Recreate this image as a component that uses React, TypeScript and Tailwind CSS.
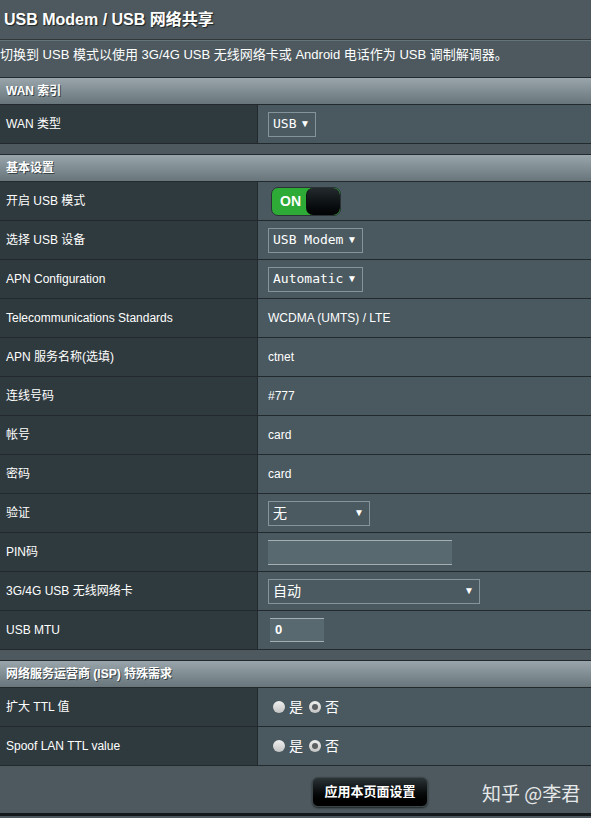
import React from 'react';

const SANS = "font-['Liberation_Sans','Noto_Sans_CJK_SC',sans-serif]";
const MONO = "font-['DejaVu_Sans_Mono',monospace]";

function Header({ title }: { title: string }) {
  return (
    <div className="h-[27px] flex items-center px-[6px] border-b border-[#222a2d] bg-gradient-to-b from-[#99a5aa] to-[#68767c] text-[12px] font-bold text-white [text-shadow:1px_1px_0_#3a4448]">
      {title}
    </div>
  );
}

function Row({ label, children }: { label: string; children?: React.ReactNode }) {
  return (
    <div className="h-[39px] flex border-b border-[#222a2d]">
      <div className="w-[258px] shrink-0 flex items-center px-[6px] bg-[#2f3a3e] border-r border-[#222a2d] text-[12px] text-white">
        {label}
      </div>
      <div className="flex-1 flex items-center pl-[10px] bg-[#4a595f] text-[12px] text-white">
        {children}
      </div>
    </div>
  );
}

function Select({ value, width, mono = true }: { value: string; width: string; mono?: boolean }) {
  return (
    <div
      className={`${width} h-[25px] flex items-center justify-between pl-[4px] pr-[5px] border border-[#85939a] bg-[#4a5a60] text-white`}
    >
      <span className={mono ? `${MONO} text-[13px]` : `${SANS} text-[14px]`}>{value}</span>
      <span className="text-[10px] leading-none">▼</span>
    </div>
  );
}

function Toggle() {
  return (
    <div className="relative ml-[3px] w-[70px] h-[29px] rounded-[7px] bg-[#2eaa37] border border-[#2a3236] overflow-hidden">
      <span className="absolute left-[8px] top-[4px] text-[14px] font-bold text-white leading-[19px]">ON</span>
      <div className="absolute right-0 top-0 bottom-0 w-[34px] rounded-[7px] bg-gradient-to-b from-[#232a2d] to-[#020304] border-l border-[#111]" />
    </div>
  );
}

function Radio({ checked }: { checked?: boolean }) {
  return (
    <span className="w-[12px] h-[12px] rounded-full bg-gradient-to-b from-[#f0f0f0] to-[#c4c4c4] flex items-center justify-center">
      {checked && <span className="w-[6px] h-[6px] rounded-full bg-[#5b5f61]" />}
    </span>
  );
}

function YesNo() {
  return (
    <div className="flex items-center ml-[5px] text-[14px]">
      <Radio />
      <span className="ml-[4px]">是</span>
      <span className="ml-[6px]" />
      <Radio checked />
      <span className="ml-[4px]">否</span>
    </div>
  );
}

export default function App() {
  return (
    <div className={`w-[591px] h-[818px] overflow-hidden bg-[#4d595e] text-white ${SANS}`}>
      {/* page title */}
      <div className="h-[39px] flex items-center px-[4px] text-[16px] font-bold [text-shadow:1px_1px_1px_#1c2326]">
        USB Modem / USB 网络共享
      </div>
      <div className="h-[1px] bg-[#2f373a]" />
      <div className="h-[1px] bg-[#65737a]" />
      <div className="h-[36px] pt-[6px] text-[13px] leading-[16px]">
        切换到 USB 模式以使用 3G/4G USB 无线网络卡或 Android 电话作为 USB 调制解调器。
      </div>

      {/* WAN index */}
      <div className="border-t border-[#222a2d]">
        <Header title="WAN 索引" />
        <Row label="WAN 类型">
          <Select value="USB" width="w-[48px]" />
        </Row>
      </div>

      <div className="h-[10px]" />

      {/* basic settings */}
      <div className="border-t border-[#222a2d]">
        <Header title="基本设置" />
        <Row label="开启 USB 模式">
          <Toggle />
        </Row>
        <Row label="选择 USB 设备">
          <Select value="USB Modem" width="w-[95px]" />
        </Row>
        <Row label="APN Configuration">
          <Select value="Automatic" width="w-[95px]" />
        </Row>
        <Row label="Telecommunications Standards">WCDMA (UMTS) / LTE</Row>
        <Row label="APN 服务名称(选填)">ctnet</Row>
        <Row label="连线号码">#777</Row>
        <Row label="帐号">card</Row>
        <Row label="密码">card</Row>
        <Row label="验证">
          <Select value="无" width="w-[102px]" mono={false} />
        </Row>
        <Row label="PIN码">
          <div className="w-[184px] h-[25px] bg-[#586a70] border-t border-b border-[#a3aeb2]" />
        </Row>
        <Row label="3G/4G USB 无线网络卡">
          <Select value="自动" width="w-[212px]" mono={false} />
        </Row>
        <Row label="USB MTU">
          <div className="ml-[2px] w-[54px] h-[24px] flex items-center pl-[5px] bg-[#586a70] border-t border-b border-[#a3aeb2] text-[13px] font-bold">
            0
          </div>
        </Row>
      </div>

      <div className="h-[10px]" />

      {/* ISP */}
      <div className="border-t border-[#222a2d]">
        <Header title="网络服务运营商 (ISP) 特殊需求" />
        <Row label="扩大 TTL 值">
          <YesNo />
        </Row>
        <Row label="Spoof LAN TTL value">
          <YesNo />
        </Row>
      </div>

      {/* apply */}
      <div className="h-[47px] flex items-start pt-[11px]">
        <button className="ml-[312px] w-[116px] h-[30px] rounded-[6px] bg-gradient-to-b from-[#2c3437] to-[#000] border border-[#3c4548] text-[13px] font-bold text-white shadow-[0_1px_2px_#1d2326]">
          应用本页面设置
        </button>
        <span className="ml-[54px] mt-[6px] text-[19px] leading-[20px] text-[#e6e8e9] font-['Noto_Sans_CJK_SC',sans-serif]">
          知乎 @李君
        </span>
      </div>
      <div className="h-[3px] bg-[#15191b]" />
    </div>
  );
}
